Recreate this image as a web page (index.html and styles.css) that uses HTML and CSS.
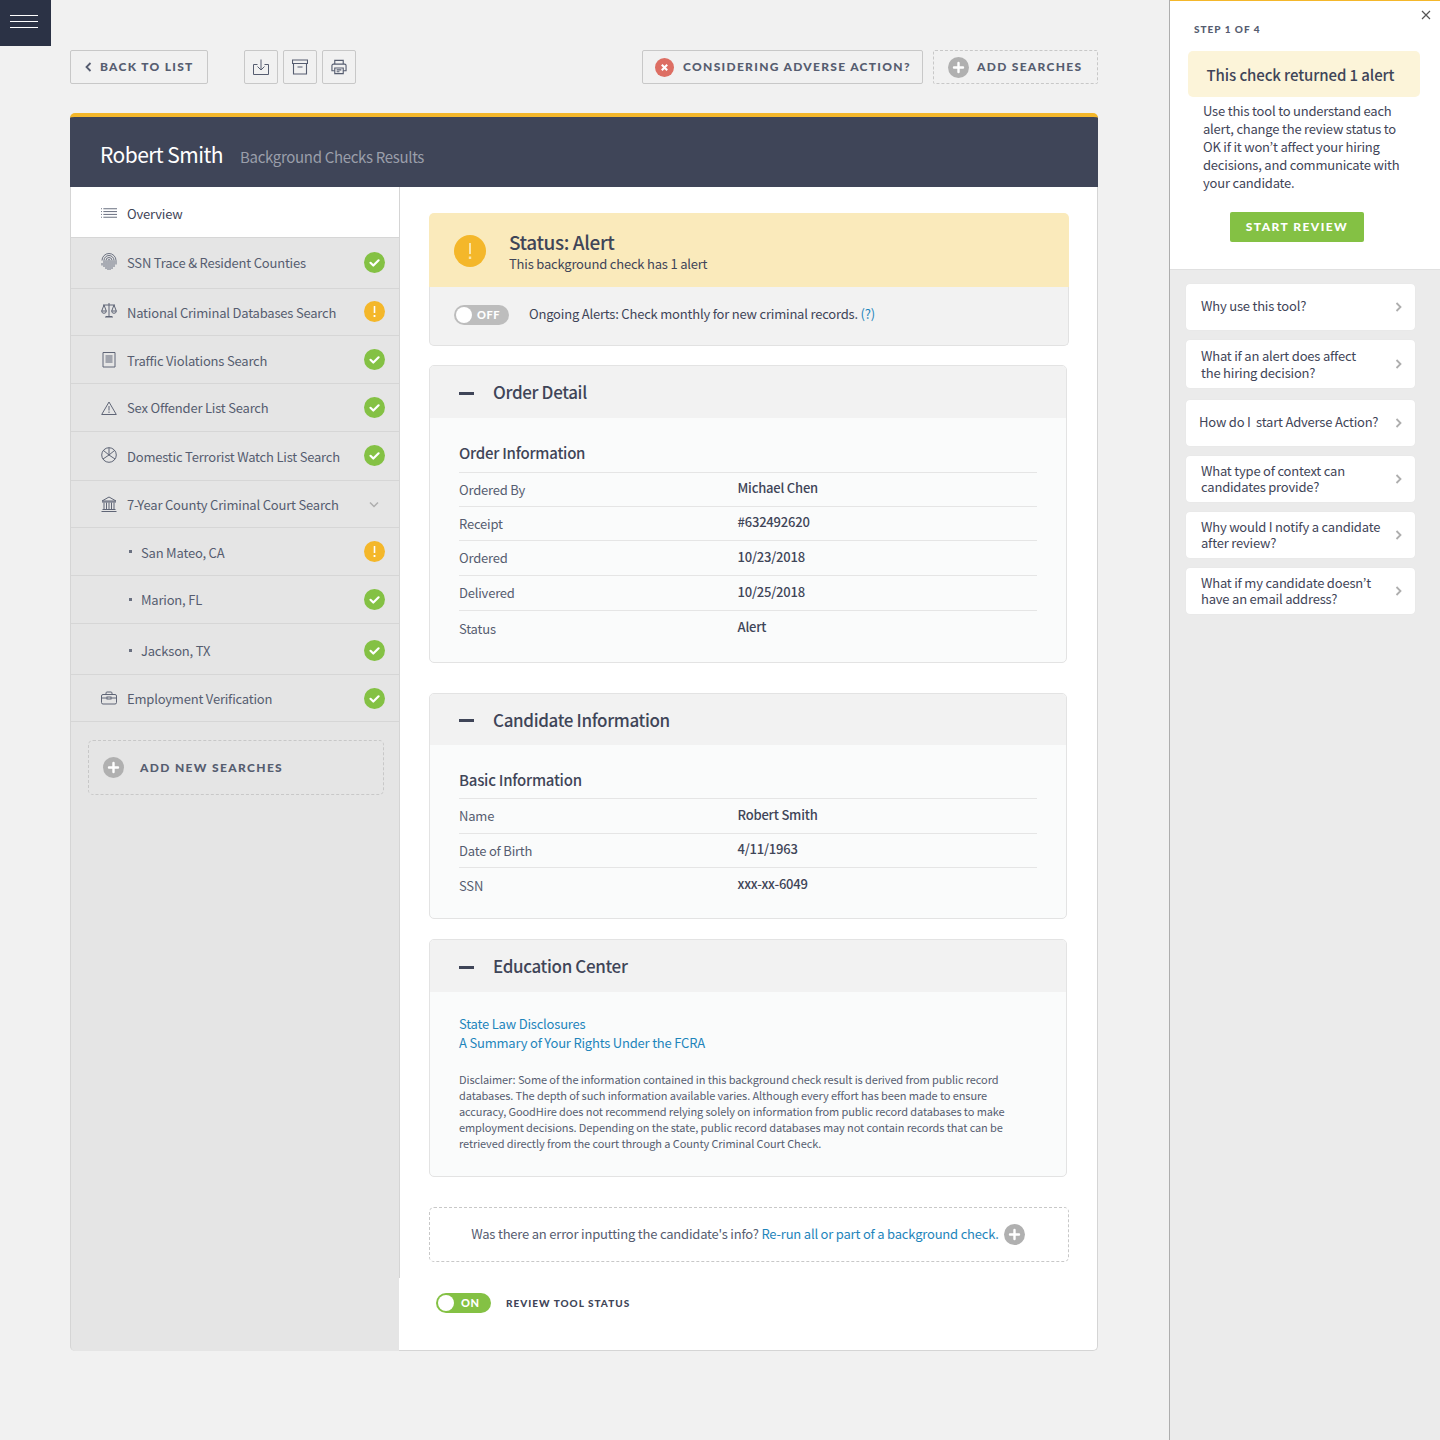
FILE: index.html
```html
<!DOCTYPE html>
<html lang="en">
<head>
<meta charset="utf-8">
<title>Robert Smith - Background Checks Results</title>
<link rel="stylesheet" href="styles.css">
</head>
<body>
<svg class="defs" aria-hidden="true">
  <defs>
    <symbol id="i-list" viewBox="0 0 17 10"><path d="M0 .5h1M0 3.5h1M0 6.5h1M0 9.5h1" stroke="currentColor"/><path d="M2.5 .5H17M2.5 3.5H17M2.5 6.5H17M2.5 9.5H17" stroke="currentColor"/></symbol>
    <symbol id="i-finger" viewBox="0 0 16 18"><g fill="none" stroke="currentColor" stroke-width=".9"><path d="M1 7.5a7 7 0 0 1 14 0v4"/><path d="M3 14V7.5a5 5 0 0 1 10 0V14"/><path d="M5 16V7.5a3 3 0 0 1 6 0V16"/><path d="M7 17V7.5a1 1 0 0 1 2 0V17"/><path d="M1 10v2.500"/></g></symbol>
    <symbol id="i-scale" viewBox="0 0 16 16"><g fill="none" stroke="currentColor"><path d="M8 1v13M4 15h8M2 3h12M5 14.500h6"/><path d="M3 3 .7 9h4.600zM13 3l-2.300 6h4.600z"/><path d="M.7 9a2.300 2.300 0 0 0 4.600 0M10.700 9a2.300 2.300 0 0 0 4.600 0"/></g></symbol>
    <symbol id="i-receipt" viewBox="-1.500 -1 16 18"><g fill="none" stroke="currentColor"><path d="M.5.5h12v14.500h-12z"/></g><path d="M3 4h7M3 6h7M3 8h7M3 10h7" stroke="currentColor" stroke-width="1.100"/></symbol>
    <symbol id="i-warn" viewBox="0 0 16 14"><g fill="none" stroke="currentColor"><path d="M8 1 .7 13.500h14.600z"/><path d="M8 5v4.500M8 10.500v1.500"/></g></symbol>
    <symbol id="i-wheel" viewBox="0 0 16 16"><g fill="none" stroke="currentColor"><circle cx="8" cy="8" r="7.300"/><path d="M8 8V.7M8 8l-6 4M8 8l6 4M8 8 2.500 3.500M8 8l5.500-4.500"/></g></symbol>
    <symbol id="i-bank" viewBox="0 0 16 16"><g fill="none" stroke="currentColor"><path d="M8 1 1 5h14zM1 6h14M.5 15.500h15M1.500 13.500h13"/><path d="M3 6.500v6.500M5.500 6.500v6.500M8 6.500v6.500M10.500 6.500v6.500M13 6.500v6.500"/></g></symbol>
    <symbol id="i-case" viewBox="0 0 16 13"><g fill="none" stroke="currentColor"><rect x=".5" y="3" width="15" height="9.500" rx="1.500"/><path d="M5 3V1.500a1 1 0 0 1 1-1h4a1 1 0 0 1 1 1V3M.5 6.500h5.500M10 6.500h5.500"/><rect x="6" y="5.500" width="4" height="2"/></g></symbol>
    <symbol id="i-check" viewBox="0 0 21 21"><circle cx="10.500" cy="10.500" r="10.500" fill="#84c144"/><path d="M6.500 10.800l2.800 2.700 5.300-5.200" fill="none" stroke="#fff" stroke-width="2.200" stroke-linecap="round" stroke-linejoin="round"/></symbol>
    <symbol id="i-alert" viewBox="0 0 21 21"><circle cx="10.500" cy="10.500" r="10.500" fill="#f4b72a"/><path d="M10.500 5v7" stroke="#fff" stroke-width="1.600"/><path d="M10.500 14v2" stroke="#fff" stroke-width="1.800"/></symbol>
    <symbol id="i-plus" viewBox="0 0 21 21"><circle cx="10.500" cy="10.500" r="10.500" fill="#b0b0b0"/><path d="M10.500 6v9M6 10.500h9" stroke="#fff" stroke-width="2.400" stroke-linecap="round"/></symbol>
    <symbol id="i-chev" viewBox="0 0 7 10"><path d="M1.500 1l4 4-4 4" fill="none" stroke="#aeaeae" stroke-width="1.800"/></symbol>
  </defs>
</svg>
<div class="layout">
  <main class="page">
    <div class="burger" aria-label="Menu"><span></span><span></span><span></span></div>
    <div class="toolbar">
      <a class="btn btn-back"><svg class="back-chev" viewBox="0 0 7 10"><path d="M5.500 1l-4 4 4 4" fill="none" stroke="#565d70" stroke-width="1.800"/></svg>BACK TO LIST</a>
      <div class="icon-btns">
        <a class="btn btn-icon"><svg viewBox="0 0 16 16" class="tool-i"><g fill="none" stroke="#565d70"><path d="M4.500 5.500H.5v10h15v-10h-4M8 .5v10M4.500 7.500 8 11l3.500-3.500"/></g></svg></a>
        <a class="btn btn-icon"><svg viewBox="0 0 16 16" class="tool-i"><g fill="none" stroke="#565d70" stroke-width="1.100"><path d="M.5 1h15v3.500H.5zM1.500 4.500v10.500h13V4.500M5.500 8h5"/></g></svg></a>
        <a class="btn btn-icon"><svg viewBox="0 0 17 16" class="tool-i"><g fill="none" stroke="#565d70" stroke-width="1.200"><path d="M4 5V1h9v4M4 12H1V6.500A1.500 1.500 0 0 1 2.500 5h12A1.500 1.500 0 0 1 16 6.500V12h-3"/><path d="M4 9h9v6H4zM6 11h5M6 13h3"/></g></svg></a>
      </div>
      <div class="toolbar-right">
        <a class="btn btn-adverse"><svg class="tool-badge" viewBox="0 0 19 19"><circle cx="9.500" cy="9.500" r="9.500" fill="#dd6e63"/><path d="M6.800 6.800l5.400 5.400M12.200 6.800l-5.400 5.400" stroke="#fff" stroke-width="2.100"/></svg>CONSIDERING ADVERSE ACTION?</a>
        <a class="btn btn-add"><svg class="tool-plus"><use href="#i-plus"/></svg>ADD SEARCHES</a>
      </div>
    </div>

    <section class="card">
      <header class="card-head">
        <h1>Robert Smith</h1>
        <span class="card-sub">Background Checks Results</span>
      </header>
      <div class="card-body">
        <aside class="side">
          <ul class="side-list">
            <li class="side-row side-overview h51 drop"><svg class="side-i i-list"><use href="#i-list"/></svg><span class="side-label">Overview</span></li>
            <li class="side-row h51 lift"><svg class="side-i"><use href="#i-finger"/></svg><span class="side-label">SSN Trace &amp; Resident Counties</span><svg class="badge"><use href="#i-check"/></svg></li>
            <li class="side-row h47 lift low"><svg class="side-i up"><use href="#i-scale"/></svg><span class="side-label">National Criminal Databases Search</span><svg class="badge"><use href="#i-alert"/></svg></li>
            <li class="side-row h48 low"><svg class="side-i"><use href="#i-receipt"/></svg><span class="side-label">Traffic Violations Search</span><svg class="badge"><use href="#i-check"/></svg></li>
            <li class="side-row h48"><svg class="side-i"><use href="#i-warn"/></svg><span class="side-label">Sex Offender List Search</span><svg class="badge"><use href="#i-check"/></svg></li>
            <li class="side-row h49 lift low"><svg class="side-i"><use href="#i-wheel"/></svg><span class="side-label">Domestic Terrorist Watch List Search</span><svg class="badge"><use href="#i-check"/></svg></li>
            <li class="side-row h47"><svg class="side-i"><use href="#i-bank"/></svg><span class="side-label">7-Year County Criminal Court Search</span><svg class="down" viewBox="0 0 10 7"><path d="M1 1.500l4 4 4-4" fill="none" stroke="#aeaeae" stroke-width="1.500"/></svg></li>
            <li class="side-row sub h48 low"><span class="dot"></span><span class="side-label">San Mateo, CA</span><svg class="badge"><use href="#i-alert"/></svg></li>
            <li class="side-row sub h48"><span class="dot"></span><span class="side-label">Marion, FL</span><svg class="badge"><use href="#i-check"/></svg></li>
            <li class="side-row sub h51 drop"><span class="dot"></span><span class="side-label">Jackson, TX</span><svg class="badge"><use href="#i-check"/></svg></li>
            <li class="side-row h47"><svg class="side-i"><use href="#i-case"/></svg><span class="side-label">Employment Verification</span><svg class="badge"><use href="#i-check"/></svg></li>
          </ul>
          <a class="add-new"><svg class="badge-plus"><use href="#i-plus"/></svg>ADD NEW SEARCHES</a>
        </aside>
        <div class="main-col">
          <div class="content">
            <div class="status">
              <div class="status-top">
                <svg class="status-i" viewBox="0 0 32 32"><circle cx="16" cy="16" r="16" fill="#f4b72a"/><path d="M16 8v11" stroke="#fbe5a9" stroke-width="2"/><path d="M16 21.500v2.500" stroke="#fbe5a9" stroke-width="2.400"/></svg>
                <div class="status-copy">
                  <div class="status-title">Status: Alert</div>
                  <div class="status-text">This background check has 1 alert</div>
                </div>
              </div>
              <div class="status-bottom">
                <span class="toggle toggle-off"><i class="knob"></i>OFF</span>
                <span class="ongoing">Ongoing Alerts: Check monthly for new criminal records. <a class="link">(?)</a></span>
              </div>
            </div>

            <section class="panel order">
              <div class="panel-head"><span class="minus"></span><h2>Order Detail</h2></div>
              <div class="panel-body">
                <h3>Order Information</h3>
                <div class="kv"><span>Ordered By</span><b>Michael Chen</b></div>
                <div class="kv"><span>Receipt</span><b>#632492620</b></div>
                <div class="kv"><span>Ordered</span><b>10/23/2018</b></div>
                <div class="kv"><span>Delivered</span><b>10/25/2018</b></div>
                <div class="kv"><span>Status</span><b>Alert</b></div>
              </div>
            </section>

            <section class="panel candidate">
              <div class="panel-head"><span class="minus"></span><h2>Candidate Information</h2></div>
              <div class="panel-body">
                <h3>Basic Information</h3>
                <div class="kv"><span>Name</span><b>Robert Smith</b></div>
                <div class="kv"><span>Date of Birth</span><b>4/11/1963</b></div>
                <div class="kv"><span>SSN</span><b>xxx-xx-6049</b></div>
              </div>
            </section>

            <section class="panel edu">
              <div class="panel-head"><span class="minus"></span><h2>Education Center</h2></div>
              <div class="panel-body edu-body">
                <a class="link edu-link">State Law Disclosures</a>
                <a class="link edu-link">A Summary of Your Rights Under the FCRA</a>
                <p class="disclaimer">Disclaimer: Some of the information contained in this background check result is derived from public record databases. The depth of such information available varies. Although every effort has been made to ensure accuracy, GoodHire does not recommend relying solely on information from public record databases to make employment decisions. Depending on the state, public record databases may not contain records that can be retrieved directly from the court through a County Criminal Court Check.</p>
              </div>
            </section>

            <div class="rerun"><span class="rerun-text">Was there an error inputting the candidate's info? <a class="link">Re-run all or part of a background check.</a></span><svg class="badge-plus rerun-plus"><use href="#i-plus"/></svg></div>
          </div>
          <div class="review-foot">
            <span class="toggle toggle-on"><i class="knob"></i>ON</span>
            <span class="review-label">REVIEW TOOL STATUS</span>
          </div>
        </div>
      </div>
    </section>
  </main>

  <aside class="tool">
    <div class="tool-top">
      <svg class="close" viewBox="0 0 10 10"><path d="M1 1l8 8M9 1 1 9" stroke="#555" stroke-width="1.200"/></svg>
      <div class="step">STEP 1 OF 4</div>
      <div class="tool-alert">This check returned 1 alert</div>
      <p class="tool-text">Use this tool to understand each alert, change the review status to OK if it won’t affect your hiring decisions, and communicate with your candidate.</p>
      <a class="start">START REVIEW</a>
    </div>
    <div class="faq">
      <a class="faq-item f46 one"><span>Why use this tool?</span><svg class="chev"><use href="#i-chev"/></svg></a>
      <a class="faq-item f48 g10"><span>What if an alert does affect<br>the hiring decision?</span><svg class="chev"><use href="#i-chev"/></svg></a>
      <a class="faq-item f46 g12 tight one"><span>How do I&nbsp; start Adverse Action?</span><svg class="chev"><use href="#i-chev"/></svg></a>
      <a class="faq-item f46 g10"><span>What type of context can<br>candidates provide?</span><svg class="chev"><use href="#i-chev"/></svg></a>
      <a class="faq-item f46 g10"><span>Why would I notify a candidate<br>after review?</span><svg class="chev"><use href="#i-chev"/></svg></a>
      <a class="faq-item f46 g10"><span>What if my candidate doesn’t<br>have an email address?</span><svg class="chev"><use href="#i-chev"/></svg></a>
    </div>
  </aside>
</div>
</body>
</html>
```
FILE: styles.css
```css
* { box-sizing: border-box; }
html, body { margin: 0; padding: 0; }
body {
  background: #f1f1f1;
  color: #3f4558;
  font-family: "Noto Sans CJK JP", "Noto Sans", sans-serif;
  font-size: 13px;
  letter-spacing: -.2px;
  line-height: 18px;
}
a { color: inherit; text-decoration: none; }
ul { list-style: none; margin: 0; padding: 0; }
h1, h2, h3, p { margin: 0; }
.defs { position: absolute; width: 0; height: 0; }
.layout { display: flex; min-height: 1440px; }
.page { width: 1169px; flex: none; }

.burger {
  width: 51px; height: 46px; background: #2b3245;
  display: flex; flex-direction: column; gap: 5px; padding: 15px 13px 0 10px;
}
.burger span { display: block; height: 1px; background: #fff; }

.toolbar { display: flex; align-items: center; height: 34px; margin: 4px 71px 29px 70px; }
.btn {
  display: inline-flex; align-items: center; height: 34px; white-space: nowrap;
  border: 1px solid #c8c8c8; border-radius: 2px;
  font-family: "Lato", sans-serif; font-weight: 900; font-size: 12px;
  letter-spacing: 1.3px; color: #565d70;
}
.btn-back { width: 138px; padding-left: 14px; }
.back-chev { width: 7px; height: 10px; margin-right: 8px; }
.icon-btns { display: flex; gap: 5px; margin-left: 36px; }
.btn-icon { width: 34px; justify-content: center; }
.tool-i { width: 16px; height: 16px; }
.toolbar-right { display: flex; gap: 10px; margin-left: auto; }
.btn-adverse { width: 281px; padding-left: 12px; }
.tool-badge { width: 19px; height: 19px; margin-right: 9px; }
.btn-add { width: 165px; padding-left: 14px; border-style: dashed; }
.tool-plus { width: 21px; height: 21px; margin-right: 8px; }

.card { margin: 0 71px 0 70px; height: 1238px; display: flex; flex-direction: column; }
.card-head {
  height: 74px; background: #3f4558; border-top: 4px solid #f4b72a;
  border-radius: 5px 5px 0 0; padding: 0 30px;
  display: flex; align-items: baseline;
}
.card-head h1 { font-weight: 400; font-size: 21px; letter-spacing: -.55px; line-height: 30px; color: #fff; margin-top: 22px; }
.card-sub { font-size: 15px; letter-spacing: -.32px; color: #9a9eaa; margin-left: 17px; }
.card-body { flex: 1; display: flex; }

.side {
  width: 329px; flex: none; background: #e5e5e5;
  border-left: 1px solid #d5d5d5; border-bottom-left-radius: 5px;
}
.side-row {
  display: flex; align-items: center; padding: 0 14px 0 30px;
  border-bottom: 1px solid #d6d6d6; color: #565d70;
}
.side-overview { background: #fff; color: #3f4558; }
.h47 { height: 47px; } .h48 { height: 48px; } .h49 { height: 49px; } .h51 { height: 51px; }
.lift { padding-bottom: 2px; }
.drop { padding-top: 2px; }
.side-i { width: 16px; height: 18px; margin-right: 10px; flex: none; color: #5f6576; }
.side-i.up { margin-bottom: 3px; }
.i-list { width: 16px; height: 10px; }
.side-label { padding-top: 1px; flex: 1; white-space: nowrap; }
.low .side-label { padding-top: 3px; }
.badge { width: 21px; height: 21px; flex: none; }
.down { width: 10px; height: 7px; margin-right: 6px; }
.sub { padding-left: 58px; }
.sub .dot { width: 3px; height: 3px; background: #6a7080; margin-right: 9px; flex: none; }
.add-new {
  display: flex; align-items: center; height: 55px; margin: 18px 15px 0 17px;
  border: 1px dashed #c8c8c8; border-radius: 5px; padding-left: 14px;
  font-family: "Lato", sans-serif; font-weight: 900; font-size: 12px;
  letter-spacing: 1.35px; color: #565d70;
}
.badge-plus { width: 21px; height: 21px; margin-right: 16px; flex: none; }

.main-col { flex: 1; display: flex; flex-direction: column; background: #fff; border-right: 1px solid #d5d5d5; border-bottom: 1px solid #d5d5d5; border-bottom-right-radius: 5px; min-width: 0; }
.content { height: 1091px; padding: 26px 28px 0 29px; border-left: 1px solid #d5d5d5; }

.status { border-radius: 5px; }
.status-top {
  height: 74px; background: #faeabb; border-radius: 5px 5px 0 0;
  display: flex; align-items: center; padding: 0 25px; gap: 23px;
}
.status-i { width: 32px; height: 32px; flex: none; margin-top: 2px; }
.status-copy { margin-top: 3px; }
.status-title { font-size: 19px; letter-spacing: -.4px; font-weight: 500; line-height: 24px; margin-top: -1px; }
.status-text { color: #3f4558; line-height: 18px; margin-top: 1px; }
.status-bottom {
  height: 59px; background: #f2f2f2; border: 1px solid #e2e2e2; border-top: 0;
  border-radius: 0 0 5px 5px; display: flex; align-items: center; padding: 0 0 2px 24px;
}
.toggle {
  display: inline-flex; align-items: center; height: 20px; border-radius: 10px;
  font-family: "Lato", sans-serif; font-weight: 900; font-size: 11px; color: #fff; letter-spacing: .6px;
}
.toggle-off { width: 55px; background: #bdbdbd; padding-left: 2px; }
.toggle-on { width: 55px; background: #84c144; padding-left: 2px; }
.knob { width: 16px; height: 16px; border-radius: 50%; background: #fff; margin-right: 5px; display: block; }
.toggle-on .knob { margin-right: 7px; }
.ongoing { margin: 0 0 2px 20px; color: #3f4558; }
.link { color: #1e85bb; }

.panel { width: 638px; border: 1px solid #e3e3e3; border-radius: 5px; background: #fafbfb; overflow: hidden; }
.order { height: 298px; margin-top: 19px; }
.candidate { height: 226px; margin-top: 30px; }
.edu { height: 238px; margin-top: 20px; }
.panel-head { height: 52px; background: #f2f2f2; display: flex; align-items: center; padding-left: 29px; }
.candidate .panel-head { height: 51px; }
.minus { width: 15px; height: 3px; background: #3f4558; margin-right: 19px; margin-top: 2px; }
.panel-head h2 { font-size: 17px; letter-spacing: -.35px; font-weight: 500; line-height: 24px; }
.panel-body { padding: 0 29px; }
.panel-body h3 { font-size: 15px; letter-spacing: -.25px; font-weight: 500; line-height: 20px; padding: 25px 0 9px; border-bottom: 1px solid #e5e5e5; }
.candidate .panel-body h3 { padding-bottom: 8px; }
.kv { display: flex; height: 34px; align-items: center; border-bottom: 1px solid #e5e5e5; color: #565d70; }
.kv:nth-child(n+4) { height: 35px; }
.candidate .kv:nth-child(2) { height: 35px; }
.candidate .kv:nth-child(3) { height: 34px; }
.kv:last-child { border-bottom: 0; }
.kv span { width: 278.500px; }
.kv b { font-weight: 500; color: #3f4558; margin-top: -3px; }
.edu-body { padding-top: 22px; }
.edu-link { display: block; line-height: 19px; }
.disclaimer { width: 552px; font-size: 11px; letter-spacing: -.1px; line-height: 16px; color: #565d70; margin-top: 19px; }

.rerun {
  width: 640px; height: 55px; margin-top: 30px;
  border: 1px dashed #c8c8c8; border-radius: 5px;
  display: flex; align-items: center; justify-content: center; color: #565d70;
}
.rerun-text { margin: 0 0 2px -2px; }
.rerun-plus { margin: 0 0 0 5px; }

.review-foot { flex: 1; display: flex; align-items: flex-start; padding: 15px 0 0 37px; }
.review-label {
  font-family: "Lato", sans-serif; font-weight: 900; font-size: 10px; letter-spacing: 1px;
  color: #3f4558; margin: 1px 0 0 15px;
}

.tool { width: 271px; flex: none; border-left: 1px solid #aeaeae; background: #ebebeb; }
.tool-top {
  position: relative; height: 270px; background: #fff; border-top: 1px solid #f4b72a;
  border-bottom: 1px solid #e0e0e0; padding: 21px 20px 0 18px;
}
.close { position: absolute; top: 9px; right: 9px; width: 10px; height: 10px; }
.step { font-family: "Lato", sans-serif; font-weight: 900; font-size: 10px; letter-spacing: 1px; color: #565d70; padding-left: 6px; line-height: 14px; }
.tool-alert {
  height: 46px; background: #fcf4d9; border-radius: 5px; margin-top: 15px; padding: 1px 7px 0 0;
  display: flex; align-items: center; justify-content: center;
  font-size: 15px; letter-spacing: -.1px; font-weight: 500; color: #3f4558;
}
.tool-text { width: 220px; padding: 5px 0 0 15px; color: #3f4558; }
.start {
  display: flex; align-items: center; justify-content: center;
  width: 134px; height: 30px; margin: 20px 0 0 42px;
  background: #84c144; border-radius: 2px; color: #fff;
  font-family: "Lato", sans-serif; font-weight: 900; font-size: 12px; letter-spacing: 1.45px;
}
.faq { padding: 14px 24px 0 16px; }
.faq-item {
  display: flex; align-items: center; justify-content: space-between;
  width: 229px; background: #fff; border-radius: 4px; padding: 0 13px 0 15px;
  line-height: 16px; color: #3f4558; box-shadow: 0 0 1px rgba(0,0,0,.08);
}
.faq-item span { white-space: nowrap; }
.one span { margin-bottom: 2px; }
.f46 { height: 46px; } .f48 { height: 48px; line-height: 17px; }
.g10 { margin-top: 10px; } .g12 { margin-top: 12px; }
.tight { padding-left: 13px; }
.chev { width: 7px; height: 10px; flex: none; }
```
